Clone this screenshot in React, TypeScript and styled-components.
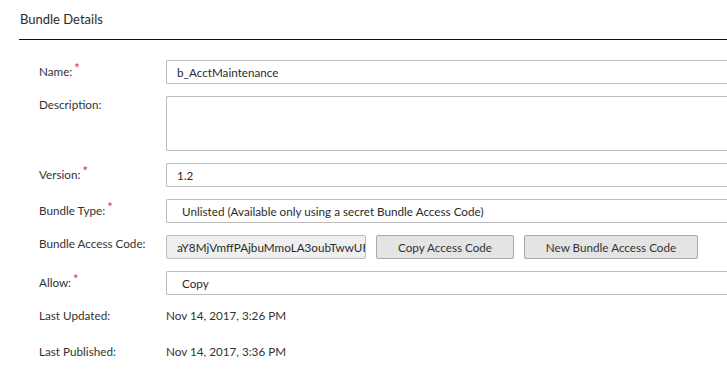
import React from "react";
import styled, { createGlobalStyle } from "styled-components";

const Global = createGlobalStyle`
  html, body { margin: 0; padding: 0; background: #fff; overflow: hidden; }
  body { font-family: Lato, "Noto Sans", sans-serif; color: #333; }
`;

const Page = styled.div`
  width: 727px;
  height: 373px;
  overflow: hidden;
`;

const Header = styled.div`
  box-sizing: border-box;
  height: 40px;
  margin-left: 19px;
  padding: 11px 0 0 1px;
  border-bottom: 1px solid #111;
  font-size: 13px;
  line-height: 16px;
  color: #2b2b2b;
`;

const Form = styled.div`
  display: grid;
  grid-template-columns: 127px 620px;
  row-gap: 12px;
  padding: 20px 0 0 39px;
  font-size: 11.7px;
`;

const Label = styled.div`
  padding-top: 0;
  line-height: 16px;
  color: #333;
`;

const Req = styled.span`
  color: #e03030;
  font-size: 13px;
  vertical-align: 3px;
  margin-left: 2px;
`;

const Field = styled.div<{ $pad?: number; $gray?: boolean; $h?: number }>`
  box-sizing: border-box;
  height: ${(p) => p.$h ?? 24}px;
  border: 1px solid #bdbdbd;
  border-right: none;
  border-radius: 2px 0 0 2px;
  background: ${(p) => (p.$gray ? "#efefef" : "#fff")};
  padding-left: ${(p) => p.$pad ?? 10}px;
  line-height: 22px;
  color: #2b2b2b;
  white-space: nowrap;
  overflow: hidden;
`;

const CodeRow = styled.div`
  display: flex;
  gap: 10px;
`;

const CodeBox = styled(Field)`
  width: 200px;
  border-right: 1px solid #bdbdbd;
  border-radius: 2px;
`;

const Button = styled.div<{ $w: number }>`
  box-sizing: border-box;
  width: ${(p) => p.$w}px;
  height: 24px;
  border: 1px solid #a9a9a9;
  border-radius: 2px;
  background: #e4e4e4;
  text-align: center;
  line-height: 22px;
  color: #333;
`;

const Value = styled.div`
  line-height: 16px;
  height: 24px;
  color: #333;
`;

export default function App() {
  return (
    <Page>
      <Global />
      <Header>Bundle Details</Header>
      <Form>
        <Label>Name:<Req>*</Req></Label>
        <Field>b_AcctMaintenance</Field>

        <Label>Description:</Label>
        <Field $h={55} />

        <Label>Version:<Req>*</Req></Label>
        <Field>1.2</Field>

        <Label>Bundle Type:<Req>*</Req></Label>
        <Field $pad={15}>Unlisted (Available only using a secret Bundle Access Code)</Field>

        <Label>Bundle Access Code:</Label>
        <CodeRow>
          <CodeBox $gray>aY8MjVmffPAjbuMmoLA3oubTwwUF</CodeBox>
          <Button $w={138}>Copy Access Code</Button>
          <Button $w={174}>New Bundle Access Code</Button>
        </CodeRow>

        <Label>Allow:<Req>*</Req></Label>
        <Field $pad={15}>Copy</Field>

        <Label>Last Updated:</Label>
        <Value>Nov 14, 2017, 3:26 PM</Value>

        <Label>Last Published:</Label>
        <Value>Nov 14, 2017, 3:36 PM</Value>
      </Form>
    </Page>
  );
}
